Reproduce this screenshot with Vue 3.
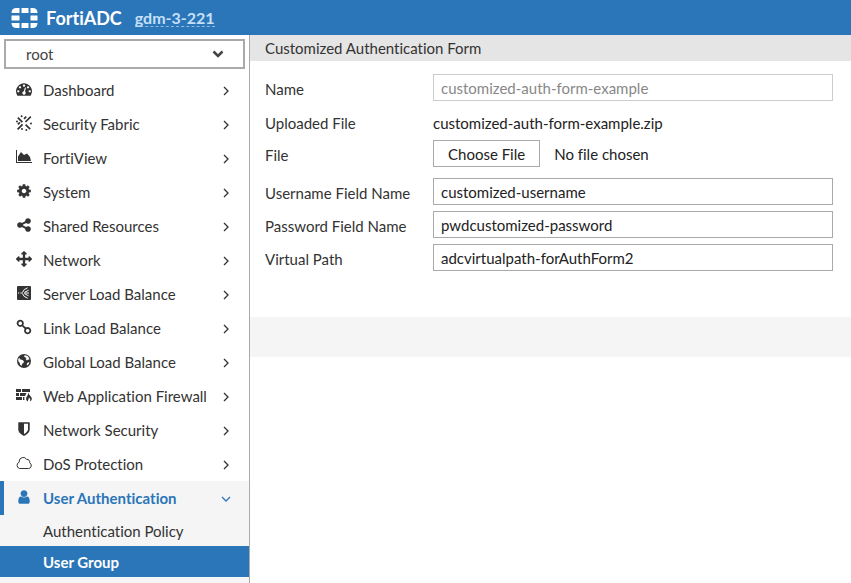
<script setup>
import { ref } from 'vue'

const vdom = ref('root')
const usernameField = ref('customized-username')
const passwordField = ref('pwdcustomized-password')
const virtualPath = ref('adcvirtualpath-forAuthForm2')

const fa = '0 0 1792 1792'
const small = '0 0 16 16'

const menu = [
  {
    label: 'Dashboard',
    box: fa,
    fill: 'M384 1152q0-53-37.5-90.5t-90.5-37.5-90.5 37.5-37.5 90.5 37.5 90.5 90.5 37.5 90.5-37.5 37.5-90.5zm192-448q0-53-37.5-90.5t-90.5-37.5-90.5 37.5-37.5 90.5 37.5 90.5 90.5 37.5 90.5-37.5 37.5-90.5zm428 481l101-382q6-26-7.5-48.5t-38.5-29.5-48 6.5-30 39.5l-101 382q-60 5-107 43.5t-63 98.5q-20 77 20 146t117 89 146-20 89-117q16-60-6-117t-72-91zm660-33q0-53-37.5-90.5t-90.5-37.5-90.5 37.5-37.5 90.5 37.5 90.5 90.5 37.5 90.5-37.5 37.5-90.5zm-640-640q0-53-37.5-90.5t-90.5-37.5-90.5 37.5-37.5 90.5 37.5 90.5 90.5 37.5 90.5-37.5 37.5-90.5zm448 192q0-53-37.5-90.5t-90.5-37.5-90.5 37.5-37.5 90.5 37.5 90.5 90.5 37.5 90.5-37.5 37.5-90.5zm320 448q0 261-141 483-19 29-54 29h-1402q-35 0-54-29-141-221-141-483 0-182 71-348t191-286 286-191 348-71 348 71 286 191 191 286 71 348z',
  },
  {
    label: 'Security Fabric',
    box: small,
    line: 'M14.8 1.6L9.4 7M6.6 9.4L1.6 14.4M1.8 2.6L6.4 7.2M9.6 9.6L14.2 14.2M8 3.8L10.2 1.6M1.8 9.4L4 7.4',
    width: 1.7,
    dots: [[5.6, 1.2], [1, 6.4], [15, 8.6], [10.4, 15], [6, 14]],
  },
  {
    label: 'FortiView',
    box: small,
    fill: 'M0 1h1v12h15v1H0zM2 12V7.5L5 3l3 3 3-1.5 3 3.5 1 4z',
  },
  {
    label: 'System',
    box: fa,
    fill: 'M1152 896q0-106-75-181t-181-75-181 75-75 181 75 181 181 75 181-75 75-181zm512-109v222q0 12-8 23t-20 13l-185 28q-19 54-39 91 35 50 107 138 10 12 10 25t-9 23q-27 37-99 108t-94 71q-12 0-26-9l-138-108q-44 23-91 38-16 136-29 186-7 28-36 28h-222q-14 0-24.5-8.5t-11.5-21.5l-28-184q-49-16-90-37l-141 107q-10 9-25 9-14 0-25-11-126-114-165-168-7-10-7-23 0-12 8-23 15-21 51-66.5t54-70.5q-27-50-41-99l-183-27q-13-2-21-12.5t-8-23.5v-222q0-12 8-23t19-13l186-28q14-46 39-92-40-57-107-138-10-12-10-24 0-10 9-23 26-36 98.5-107.5t94.5-71.5q13 0 26 10l138 107q44-23 91-38 16-136 29-186 7-28 36-28h222q14 0 24.5 8.5t11.5 21.5l28 184q49 16 90 37l142-107q9-9 24-9 13 0 25 10 129 119 165 170 7 8 7 22 0 12-8 23-15 21-51 66.5t-54 70.5q26 50 41 98l183 28q13 2 21 12.5t8 23.5z',
  },
  {
    label: 'Shared Resources',
    box: fa,
    fill: 'M1344 1024q133 0 226.5 93.5t93.5 226.5-93.5 226.5-226.5 93.5-226.5-93.5-93.5-226.5q0-12 2-34l-360-180q-92 86-218 86-133 0-226.5-93.5t-93.5-226.5 93.5-226.5 226.5-93.5q126 0 218 86l360-180q-2-22-2-34 0-133 93.5-226.5t226.5-93.5 226.5 93.5 93.5 226.5-93.5 226.5-226.5 93.5q-126 0-218-86l-360 180q2 22 2 34t-2 34l360 180q92-86 218-86z',
  },
  {
    label: 'Network',
    box: fa,
    fill: 'M1792 896q0 26-19 45l-256 256q-19 19-45 19t-45-19-19-45v-128h-384v384h128q26 0 45 19t19 45-19 45l-256 256q-19 19-45 19t-45-19l-256-256q-19-19-19-45t19-45 45-19h128v-384h-384v128q0 26-19 45t-45 19-45-19l-256-256q-19-19-19-45t19-45l256-256q19-19 45-19t45 19 19 45v128h384v-384h-128q-26 0-45-19t-19-45 19-45l256-256q19-19 45-19t45 19l256 256q19 19 19 45t-19 45-45 19h-128v384h384v-128q0-26 19-45t45-19 45 19l256 256q19 19 19 45z',
  },
  {
    label: 'Server Load Balance',
    box: small,
    fill: 'M2 1h12q1 0 1 1v12q0 1-1 1H2q-1 0-1-1V2q0-1 1-1z',
    cut: 'M2 8h1.2M4.4 8h1.4M8.4 8H13M6.4 7.6Q7.4 4 11.6 2.8M6.4 8.4Q7.4 12 11.6 13.2M8.4 7.4L12.6 5.2M8.4 8.6L12.6 10.8',
  },
  {
    label: 'Link Load Balance',
    box: small,
    line: 'M4.2 1.6a2.7 2.7 0 1 0 .1 0zM11.6 9a2.7 2.7 0 1 0 .1 0zM5.6 5.6L10.4 10.4',
    width: 1.8,
  },
  {
    label: 'Global Load Balance',
    box: small,
    fill: 'M8 1a7 7 0 1 0 0 14A7 7 0 0 0 8 1zM9 2.2L11.5 3 13 5 13.4 6.8 12 6.4 11 7.4 9.6 6 10.6 5 9 4.2 7.8 3zM3 4.8L4.4 6.6 6.6 7 8 8.4 7.4 10 6 11 5.6 13 4 11.6 3.6 9.6 2.4 8.4 2.2 6.6zM11.8 9.4L13.4 9.2 12.8 11 11.4 12.4 10.6 11.2z',
  },
  {
    label: 'Web Application Firewall',
    box: small,
    fill: 'M0 2h5v3H0zM6 2h8v3H6zM0 6h3v3H0zM4 6h6.5L9 9H4zM0 10h6v3H0zM7 10h1.6q-.8 1.6 0 3H7zM12.4 5.5q.4 2 2 3.5 3 3.4-.2 5.4 .6-2.4-1.2-4.2-.2 2-1.4 4.2-2.8-2-.6-5.2 1.4-1.7 1.4-3.7z',
  },
  {
    label: 'Network Security',
    box: fa,
    fill: 'M1344 960v-640h-448v1137q119-63 213-137 235-184 235-360zm192-768v768q0 86-33.5 170.5t-83 150-118 127.5-126.5 103-121 77.5-89.5 49.5-42.5 20q-12 6-26 6t-26-6q-16-7-42.5-20t-89.5-49.5-121-77.5-126.5-103-118-127.5-83-150-33.5-170.5v-768q0-26 19-45t45-19h1152q26 0 45 19t19 45z',
  },
  {
    label: 'DoS Protection',
    box: small,
    line: 'M3.6 13.5h8.9a3 3 0 0 0 1.1-5.7 2.5 2.5 0 0 0-2.9-3.3 4 4 0 0 0-7.5 1.9v.8a3.3 3.3 0 0 0 .4 6.3z',
    width: 1,
  },
  {
    label: 'User Authentication',
    box: fa,
    fill: 'M1536 1399q0 109-62.5 187t-150.5 78h-854q-88 0-150.5-78t-62.5-187q0-85 8.5-160.5t31.5-152 58.5-131 94-89 134.5-34.5q131 128 313 128t313-128q76 0 134.5 34.5t94 89 58.5 131 31.5 152 8.5 160.5zm-256-887q0 159-112.5 271.5t-271.5 112.5-271.5-112.5-112.5-271.5 112.5-271.5 271.5-112.5 271.5 112.5 112.5 271.5z',
    open: true,
    children: [
      { label: 'Authentication Policy' },
      { label: 'User Group', current: true },
    ],
  },
]
</script>

<template>
  <div class="app">
    <header class="topbar">
      <svg class="logo" viewBox="0 0 26 20" aria-hidden="true">
        <path d="M5 0h3v5H0q0-5 5-5zM10 0h7v5h-7zM19 0h2q5 0 5 5h-7zM0 7.5h8v5H0zM19 7.5h7v5h-7zM0 15h8v5H5q-5 0-5-5zM10 15h7v5h-7zM19 15h7q0 5-5 5h-2z" />
      </svg>
      <span class="brand">FortiADC</span>
      <a class="host" href="#">gdm-3-221</a>
    </header>

    <div class="body">
      <aside class="sidebar">
        <div class="vdom">
          <select v-model="vdom" aria-label="Virtual domain">
            <option>root</option>
          </select>
          <svg class="caret" viewBox="0 0 12 8" aria-hidden="true"><path d="M1.5 1.5L6 6l4.5-4.5" /></svg>
        </div>
        <nav>
          <ul class="menu">
            <li v-for="item in menu" :key="item.label" :class="{ open: item.open }">
              <a class="item" href="#">
                <svg class="icon" :viewBox="item.box" aria-hidden="true">
                  <path v-if="item.fill" :d="item.fill" fill-rule="evenodd" />
                  <path v-if="item.cut" class="cut" :d="item.cut" />
                  <path v-if="item.line" class="line" :d="item.line" :stroke-width="item.width" />
                  <circle v-for="(dot, i) in item.dots" :key="i" :cx="dot[0]" :cy="dot[1]" r="1" />
                </svg>
                <span class="label">{{ item.label }}</span>
                <svg class="chevron" viewBox="0 0 10 10" aria-hidden="true">
                  <path :d="item.open ? 'M1 3l4 4 4-4' : 'M3 1l4 4-4 4'" />
                </svg>
              </a>
              <ul v-if="item.children" class="submenu">
                <li v-for="child in item.children" :key="child.label">
                  <a class="subitem" :class="{ current: child.current }" href="#">{{ child.label }}</a>
                </li>
              </ul>
            </li>
          </ul>
        </nav>
      </aside>

      <main class="content">
        <h1 class="title">Customized Authentication Form</h1>
        <form class="form" @submit.prevent>
          <label for="name">Name</label>
          <input id="name" class="text" type="text" value="customized-auth-form-example" disabled />
          <span class="spaced">Uploaded File</span>
          <span class="value spaced">customized-auth-form-example.zip</span>
          <label for="file">File</label>
          <input id="file" class="file" type="file" />
          <label class="spaced" for="username">Username Field Name</label>
          <input id="username" v-model="usernameField" class="text spaced" type="text" />
          <label for="password">Password Field Name</label>
          <input id="password" v-model="passwordField" class="text" type="text" />
          <label for="path">Virtual Path</label>
          <input id="path" v-model="virtualPath" class="text" type="text" />
        </form>
        <div class="actions"></div>
      </main>
    </div>
  </div>
</template>

<style>
body {
  margin: 0;
  background: #fff;
}
</style>

<style scoped>
.app {
  display: flex;
  flex-direction: column;
  height: 100vh;
  overflow: hidden;
  color: #333;
  font: 15px/20px Lato, "Liberation Sans", sans-serif;
  font-variant-ligatures: none;
}

.app * {
  box-sizing: border-box;
}

ul {
  margin: 0;
  padding: 0;
  list-style: none;
}

a {
  color: inherit;
  text-decoration: none;
}

.topbar {
  display: flex;
  flex: none;
  align-items: center;
  height: 35px;
  padding: 0 11px;
  background: #2b75b9;
  color: #fff;
}

.logo {
  width: 27px;
  height: 20px;
  fill: #fff;
}

.brand {
  margin-left: 8px;
  font-size: 18px;
  font-weight: 700;
}

.host {
  margin-left: 13px;
  border-bottom: 1px dashed #8fbbe3;
  color: #c5e0f8;
  font-size: 16px;
  font-weight: 700;
  line-height: 17px;
}

.body {
  display: flex;
  flex: 1;
  min-height: 0;
}

.sidebar {
  flex: none;
  width: 250px;
  border-right: 1px solid #aaa;
}

.open {
  background: #f5f5f5;
}

.vdom {
  position: relative;
  margin: 4px;
}

.vdom select {
  display: block;
  width: 100%;
  height: 30px;
  padding: 0 20px;
  border: 2px solid #aaa;
  border-radius: 0;
  appearance: none;
  background: #fff;
  color: #444;
  font: inherit;
}

.caret {
  position: absolute;
  top: 11px;
  right: 21px;
  width: 12px;
  height: 8px;
  fill: none;
  stroke: #444;
  stroke-width: 2.5;
  pointer-events: none;
}

.item {
  display: flex;
  align-items: center;
  height: 34px;
  padding: 0 18px 0 16px;
}

.icon {
  width: 16px;
  height: 16px;
  margin-bottom: 3px;
  overflow: visible;
  fill: currentColor;
}

.icon .line {
  fill: none;
  stroke: currentColor;
}

.icon .cut {
  fill: none;
  stroke: #fff;
}

.label {
  flex: 1;
  margin-left: 11px;
  white-space: nowrap;
}

.chevron {
  width: 10px;
  height: 10px;
  margin-top: 2px;
  fill: none;
  stroke: currentColor;
  stroke-width: 1.3;
}

.open .item {
  padding-left: 12px;
  border-left: 4px solid #2b75b9;
  color: #2b75b9;
}

.open .label {
  font-weight: 700;
}

.submenu {
  padding-bottom: 6px;
}

.subitem {
  display: block;
  padding: 6px 43px 5px;
}

.subitem.current {
  background: #2b75b9;
  color: #fff;
  font-weight: 700;
}

.content {
  flex: 1;
  min-width: 0;
}

.title {
  margin: 0;
  padding: 3px 15px;
  background: #e5e5e5;
  font-size: 15px;
  font-weight: 400;
  line-height: 20px;
}

.form {
  display: grid;
  grid-template-columns: 168px 1fr;
  grid-template-rows: 27px 27px 27px 32px 27px 27px;
  align-items: center;
  row-gap: 6px;
  padding: 13px 18px 46px 15px;
}

.form label {
  padding-top: 2px;
}

.spaced {
  margin-top: 5px;
}

.text {
  width: 100%;
  height: 27px;
  padding: 0 7px;
  border: 1px solid #aaa;
  border-radius: 0;
  background: #fff;
  color: #222;
  font: inherit;
  font-variant-ligatures: none;
}

.text:disabled {
  border-color: #ccc;
  color: #888;
}

.value {
  color: #222;
}

.file {
  width: 100%;
  color: #222;
  font: inherit;
}

.file::file-selector-button {
  height: 27px;
  margin: 0 14px 0 0;
  padding: 0 14px;
  border: 1px solid #aaa;
  border-radius: 0;
  background: #fff;
  color: #222;
  font: inherit;
}

.actions {
  height: 40px;
  background: #f5f5f5;
}
</style>
